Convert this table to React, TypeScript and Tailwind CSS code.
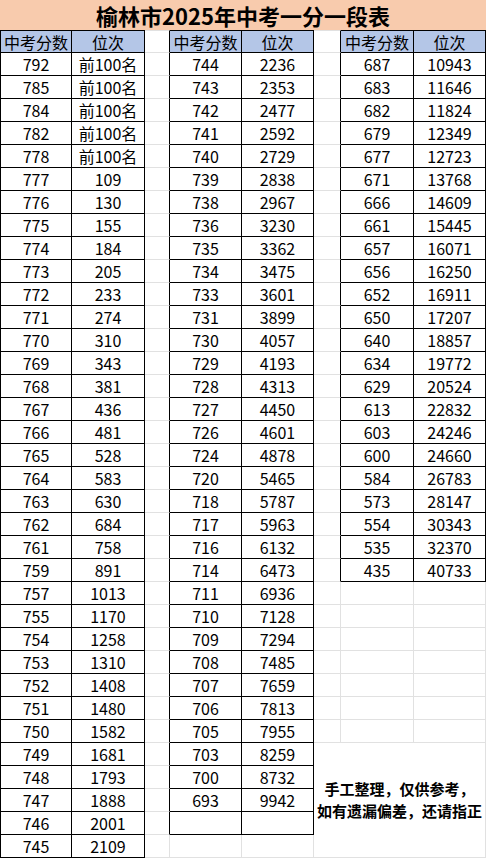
const table1: [string, string][] = [
  ['792', '前100名'], ['785', '前100名'], ['784', '前100名'], ['782', '前100名'], ['778', '前100名'],
  ['777', '109'], ['776', '130'], ['775', '155'], ['774', '184'], ['773', '205'], ['772', '233'],
  ['771', '274'], ['770', '310'], ['769', '343'], ['768', '381'], ['767', '436'], ['766', '481'],
  ['765', '528'], ['764', '583'], ['763', '630'], ['762', '684'], ['761', '758'], ['759', '891'],
  ['757', '1013'], ['755', '1170'], ['754', '1258'], ['753', '1310'], ['752', '1408'], ['751', '1480'],
  ['750', '1582'], ['749', '1681'], ['748', '1793'], ['747', '1888'], ['746', '2001'], ['745', '2109'],
];

const table2: [string, string][] = [
  ['744', '2236'], ['743', '2353'], ['742', '2477'], ['741', '2592'], ['740', '2729'], ['739', '2838'],
  ['738', '2967'], ['736', '3230'], ['735', '3362'], ['734', '3475'], ['733', '3601'], ['731', '3899'],
  ['730', '4057'], ['729', '4193'], ['728', '4313'], ['727', '4450'], ['726', '4601'], ['724', '4878'],
  ['720', '5465'], ['718', '5787'], ['717', '5963'], ['716', '6132'], ['714', '6473'], ['711', '6936'],
  ['710', '7128'], ['709', '7294'], ['708', '7485'], ['707', '7659'], ['706', '7813'], ['705', '7955'],
  ['703', '8259'], ['700', '8732'], ['693', '9942'], ['', ''],
];

const table3: [string, string][] = [
  ['687', '10943'], ['683', '11646'], ['682', '11824'], ['679', '12349'], ['677', '12723'],
  ['671', '13768'], ['666', '14609'], ['661', '15445'], ['657', '16071'], ['656', '16250'],
  ['652', '16911'], ['650', '17207'], ['640', '18857'], ['634', '19772'], ['629', '20524'],
  ['613', '22832'], ['603', '24246'], ['600', '24660'], ['584', '26783'], ['573', '28147'],
  ['554', '30343'], ['535', '32370'], ['435', '40733'],
];

const NOTE_START = 30; // data row where the merged note cell begins
const base = 'flex items-center justify-center border-b border-r leading-none';
const dark = 'border-black';
const light = 'border-[#e1e1e1]';

const Cell = ({ text, cls }: { text?: string; cls: string }) => (
  <div className={`${base} ${cls}`}>{text}</div>
);

const Header = ({ first }: { first?: boolean }) => (
  <>
    <Cell text="中考分数" cls={`${dark} border-t bg-[#b4c6e7] ${first ? 'border-l' : ''}`} />
    <Cell text="位次" cls={`${dark} border-t bg-[#b4c6e7]`} />
  </>
);

export default function App() {
  const rows = table1.map((r1, i) => {
    const r2 = table2[i];
    const r3 = table3[i];
    const inT2 = i < table2.length;
    const inT3 = i < table3.length;
    const noteRow = i >= NOTE_START;
    return (
      <div key={i} className="contents">
        <Cell text={r1[0]} cls={`${dark} border-l`} />
        <Cell text={r1[1]} cls={dark} />
        <Cell cls={`${light} ${inT2 ? 'border-r-black' : ''}`} />
        <Cell text={r2 ? r2[0] : ''} cls={inT2 ? dark : light} />
        <Cell text={r2 ? r2[1] : ''} cls={inT2 ? dark : light} />
        {i === NOTE_START && (
          <div className="col-span-3 row-span-5 flex items-center justify-center border-b border-r border-[#e1e1e1] text-center text-[15px] font-bold leading-[22px]">
            手工整理，仅供参考，
            <br />
            如有遗漏偏差，还请指正
          </div>
        )}
        {!noteRow && (
          <>
            <Cell cls={`${light} ${inT3 ? 'border-r-black' : ''}`} />
            <Cell text={r3 ? r3[0] : ''} cls={inT3 ? dark : light} />
            <Cell text={r3 ? r3[1] : ''} cls={inT3 ? dark : light} />
          </>
        )}
      </div>
    );
  });

  return (
    <div className="w-[486px] bg-white font-['Noto_Sans_CJK_SC','Noto_Sans',sans-serif] text-[16px] text-black">
      <div className="grid grid-cols-[72px_73px_25px_72px_72px_27px_73px_72px] grid-rows-[30px_repeat(36,23px)]">
        <div className="col-span-8 flex items-center justify-center bg-[#f8cbad] text-[22px] font-bold leading-none">
          榆林市2025年中考一分一段表
        </div>
        <Header first />
        <Cell cls={`${light} border-t border-r-black`} />
        <Header />
        <Cell cls={`${light} border-t border-r-black`} />
        <Header />
        {rows}
      </div>
    </div>
  );
}
